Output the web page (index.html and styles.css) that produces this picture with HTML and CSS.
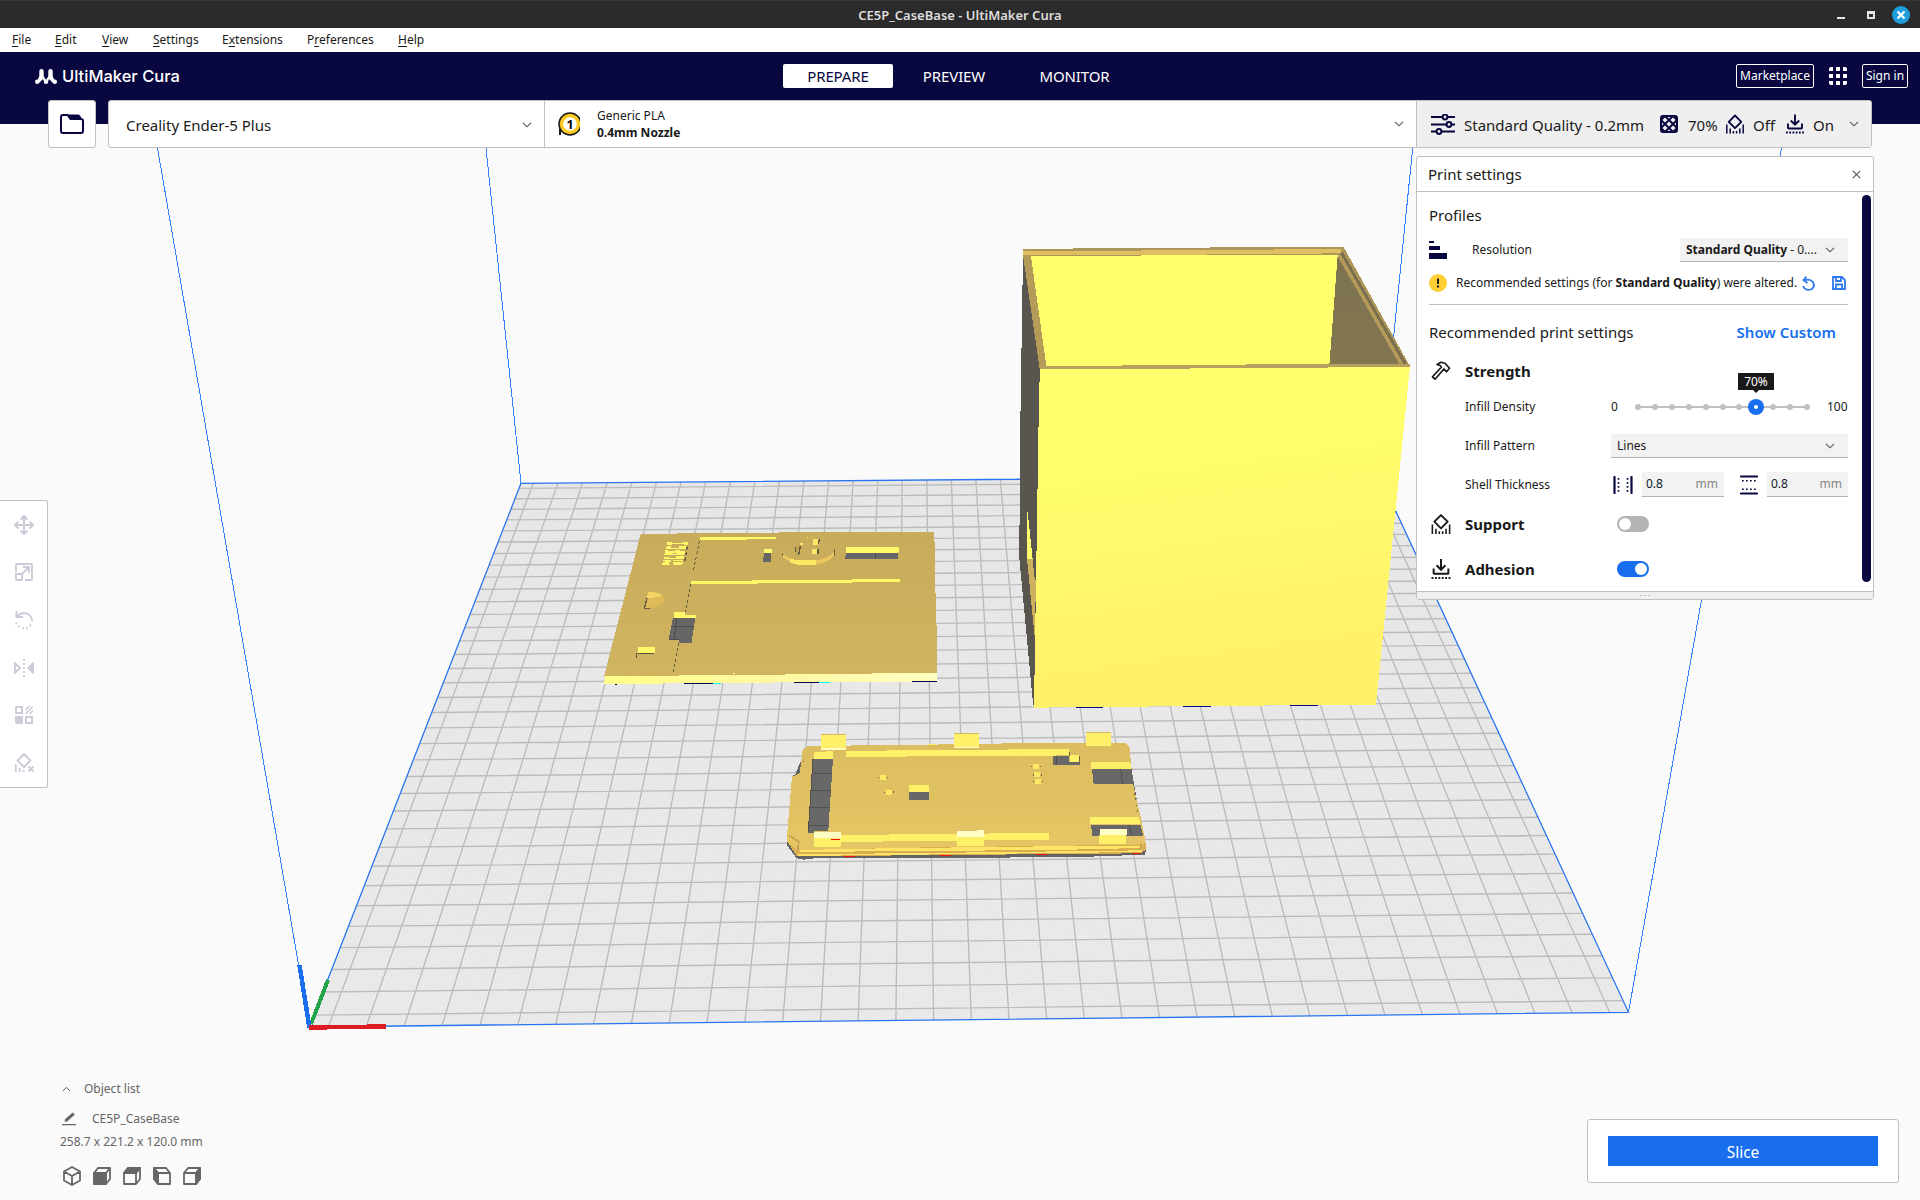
FILE: index.html
```html
<!DOCTYPE html>
<html lang="en">
<head>
<meta charset="utf-8">
<title>CE5P_CaseBase - UltiMaker Cura</title>
<link rel="stylesheet" href="styles.css">
</head>
<body>
<svg class="defs" width="0" height="0">
  <defs>
    <symbol id="chev" viewBox="0 0 10 6"><path d="M1 .8 5 4.8 9 .8" fill="none" stroke="currentColor" stroke-width="1.1"/></symbol>
    <symbol id="support" viewBox="0 0 18 19"><path d="M9 1 15.300 7.300 9 13.600 2.700 7.300Z" fill="none" stroke="currentColor" stroke-width="1.800" stroke-linejoin="round"/><path d="M.8 10v9M17.200 10v9M4.200 14v5M13.800 14v5M7.400 16.500v2.500M10.600 16.500v2.500" stroke="currentColor" stroke-width="1.500"/></symbol>
    <symbol id="adhesion" viewBox="0 0 18 19"><path d="M9 0v10M4.800 6 9 10.200 13.200 6M2 9v4.200q0 .8.8.8h12.400q.8 0 .8-.8V9" fill="none" stroke="currentColor" stroke-width="1.900"/><path d="M0 18h18" stroke="currentColor" stroke-width="1.800" stroke-dasharray="1.800 1.440"/></symbol>
  </defs>
</svg>
<div class="window">
  <header class="titlebar">
    <span class="title">CE5P_CaseBase - UltiMaker Cura</span>
    <div class="win-buttons">
      <svg width="8" height="2"><rect width="8" height="2" fill="#e6e6e6"/></svg>
      <svg width="8" height="8"><path d="M1 1h6v6H1z" fill="none" stroke="#e6e6e6" stroke-width="2"/><path d="M0 2h8" stroke="#e6e6e6" stroke-width="2"/></svg>
      <svg width="18" height="18"><circle cx="9" cy="9" r="9" fill="#1f9ede"/><path d="m5.500 5.500 7 7m0-7-7 7" stroke="#fff" stroke-width="2.200"/></svg>
    </div>
  </header>
  <nav class="menubar">
    <span class="m-file"><u>F</u>ile</span><span class="m-edit"><u>E</u>dit</span><span class="m-view"><u>V</u>iew</span><span class="m-set"><u>S</u>ettings</span><span class="m-ext">E<u>x</u>tensions</span><span class="m-pref">P<u>r</u>eferences</span><span class="m-help"><u>H</u>elp</span>
  </nav>
  <div class="header">
    <div class="brand">
      <svg width="22" height="15" viewBox="0 0 22 15"><g stroke="#fff" stroke-width="4.400" stroke-linecap="round" fill="none"><path d="M6.500 2.200v6M15.500 2.200v6M2.200 12.800h.01M11 12.800h.01M19.800 12.800h.01"/></g><path d="M4.500 7 2.500 11l1.500 3 4-4 1.500 4h3l1.500-4 4 4 1.500-3L17.500 7h-4l-2.500 4-2.500-4z" fill="#fff"/></svg>
      <span>UltiMaker Cura</span>
    </div>
    <div class="stages"><span class="stage on">PREPARE</span><span class="stage">PREVIEW</span><span class="stage wide">MONITOR</span></div>
    <div class="account">
      <span class="outline-btn market">Marketplace</span>
      <svg width="18" height="18" fill="#fff"><path d="M2 0h2v4H0V2q0-2 2-2zM7 0h4v4H7zM14 0h2q2 0 2 2v2h-4zM0 7h4v4H0zM7 7h4v4H7zM14 7h4v4h-4zM0 14h4v4H2q-2 0-2-2zM7 14h4v4H7zM14 14h4v2q0 2-2 2h-2z"/></svg>
      <span class="outline-btn signin">Sign in</span>
    </div>
  </div>
  <main class="workspace">
    <svg class="scene" viewBox="0 100 1920 1100" width="1920" height="1100">
      <defs>
        <linearGradient id="front" x1="0" y1="0" x2=".15" y2="1"><stop offset=".25" stop-color="#ffff6d"/><stop offset="1" stop-color="#fff069"/></linearGradient>
        <linearGradient id="plate" x1="0" y1="0" x2="0" y2="1"><stop offset="0" stop-color="#c8ac5b"/><stop offset="1" stop-color="#d1b45f"/></linearGradient>
        <linearGradient id="lid" x1="0" y1="0" x2="0" y2="1"><stop offset="0" stop-color="#dbbd60"/><stop offset="1" stop-color="#e6c664"/></linearGradient>
        <linearGradient id="lip" x1="0" y1="0" x2="1" y2="0"><stop offset="0" stop-color="#ffff89"/><stop offset=".5" stop-color="#fff7a0"/><stop offset="1" stop-color="#ffffc0"/></linearGradient>
        <linearGradient id="wallR" x1="0" y1="0" x2="0" y2="1"><stop offset="0" stop-color="#7d7250"/><stop offset="1" stop-color="#82774f"/></linearGradient>
      </defs>
      <rect y="100" width="1920" height="24" fill="#08073f"/>
      <polygon points="309.3,1027 1628.5,1012.3 1379.6,476.3 521,483.3" fill="#ececec"/>
      <path id="minor" fill="none" stroke="#e2e2e2" stroke-width=".5"/>
      <path id="major" fill="none" stroke="#bbb" stroke-width="1.400"/>
      <polygon points="309.3,1027 1628.5,1012.3 1379.6,476.3 521,483.3" fill="none" stroke="#2874ee" stroke-width="1.300"/>
      <path class="crisp" d="M309.300 1027 157.500 148M521 483.300 486 148M1379.600 476.300 1412.700 148M1628.500 1012.300 1781.500 148" fill="none" stroke="#3282ff"/>
      <g class="crisp">
        <path d="m311 1024 17-44" stroke="#23a44b" stroke-width="4"/>
        <path d="m309.500 1028-10-63" stroke="#196ef0" stroke-width="4.500"/>
        <path d="m309 1027.500 77-1" stroke="#dc1b23" stroke-width="4.500"/>
      </g>

      <g class="crisp" transform="translate(590 510) scale(.33333)">
        <path d="m50 520 32 2M282 520h98M612 517h80M942 514h99" stroke="#05054a" stroke-width="4"/>
        <path d="M370 520h23M687 517h33" stroke="#0ff" stroke-width="4"/>
        <path d="M152 72 380 69 760 66H1033L1036 230 1041 390V490L42 500Z" fill="url(#plate)"/>
        <path d="M46 499 312 496 642 493 975 489H1041V514L612 517 282 520 42 522Z" fill="url(#lip)"/>
        <path d="M330 81H558V87L384 90H330ZM303 213 552 211 930 207V215L705 219 303 222ZM522 117H546V129H522ZM768 111H927V124L924 129H768ZM252 306H286V315H318V324H252ZM144 411H195V430H144ZM288 395H303V399H288Z" fill="#fff868"/>
        <path d="M522 129H544V156H519ZM768 129H924V147H765ZM249 324H316L306 388V398H267V389H236Z" fill="#666"/>
        <path d="M856 129v18M261 324l-9 65M246 349h67M237 388h30" stroke="#4c4c4c" stroke-width="3"/>
        <path d="M328 93 310 183M302 222 286 306M267 399 248 490" stroke="#655c40" stroke-width="3" stroke-dasharray="9 7" fill="none"/>
        <path d="M232 95h10l6 4h30l6-4h10v9h-10l-4-2h-30l-6 3h-14zM230 109h14v5h24v-5h24l-2 8h-62zM226 119h8v4h22v-4h14v3h16l-1 6h-60zM224 130h24v3h14v-3h22l-1 6h-60zM222 140h16v3h20v-4h24l-2 7h-59zM219 150h26l-2 5h-6v6h2v4h-23l2-8h8v-4h-8zM250 150h29v4h-29zM252 155h26v6l-6 4h-18l-6-4z" fill="#fff868"/>
        <path d="M292 108 284 155" stroke="#6b6140" stroke-width="4" stroke-dasharray="12 5"/>
        <path d="M174 246Q214 244 226 269 214 292 163 296Z" fill="#dfba59"/><path d="M174 246Q208 246 219 258L188 264 171 265Z" fill="#f6d264"/><path d="m171 264-8 32h18" stroke="#6b6140" stroke-width="4" fill="none"/>
        <path d="M144 430h48M141 428l-3 15" stroke="#5a523a" stroke-width="3"/>
        <path d="M577 126Q590 152 655 153 720 149 733 122V134Q715 164 655 165 590 160 577 138Z" fill="#e9c75e"/><path d="M600 146Q625 153 678 151V164H624L600 158Z" fill="#ffe964"/><path d="M577 128v10M733 117v20" stroke="#6b6140" stroke-width="4"/>
        <path d="M613 112 634 100 628 132H619Z" fill="#c1a34f"/><path d="m616 112v14m10 8 5-25M688 88l-3 14M684 117v14" stroke="#625a3e" stroke-width="4"/><path d="M668 88h15v16h-15zM665 116h15v16h-15zM630 100h8v5h-8zM651 81h4v3h-4zM662 81h4v3h-4z" fill="#ffe766"/>
        <path d="M430 489h5v4h-5z" fill="#ffff80"/>
      </g>

      <g class="crisp" transform="translate(770 710) scale(.33333)">
        <path d="M96 144 76 192 66 200 50 392 50 405 80 445 100 449 150 443 675 443 960 440 1125 434 1128 418 1088 200 1078 120Z" fill="#646464"/>
        <path d="M112 108 475 104 790 99H1066L1078 110 1090 225 1114 330 1128 402V420L1110 430 80 439 50 391 66 200 89 190 98 120Z" fill="url(#lid)"/>
        <path d="M80 419 95 425 337 414 1112 404 1127 398V420L1112 430 80 439 60 402Z" fill="#d9ae4e"/>
        <path d="M90 420 340 415 915 408 1112 409V414L860 420 290 424 90 427ZM85 433 550 428 1115 421V426L700 431 85 438Z" fill="#ffe366"/>
        <path d="M56 376 86 395 84 420M1112 400v20" stroke="#c09f4c" stroke-width="5" fill="none"/>
        <path d="M129 147H189L175 362H132L132 369H113ZM417 246H477V270H417ZM849 138H898V156H930V164H849ZM966 178H1086L1090 222H971ZM963 344H1112L1119 377H967Z" fill="#686868"/>
        <path d="M127 190h59M124 241h59M119 292h61M116 347h59M129 147 115 365M1052 178l6 44M1078 344l6 30M860 140v24" stroke="#505050" stroke-width="3"/>
        <path d="M153 74H228V118H153ZM552 70H627V113H552ZM948 67H1023V109H948ZM132 127 189 123V147H132ZM228 123 484 120 795 118 897 117V135L795 139H474L228 141ZM417 225H477V246H417ZM963 156H1080L1085 178H963ZM900 135H927V156H900ZM960 321H1106L1112 343H960ZM213 375 410 373 560 371H642L705 369H837V389L642 391 213 396ZM132 383H213V411H132ZM561 380H642V408H561ZM987 374H1068V402H987Z" fill="#fff069"/>
        <path d="M132 366H213V384H132ZM561 363 642 361V381H561ZM990 356H1071V375H990ZM153 115h75v4h-75zM552 111h75v3h-75z" fill="#ffffc5"/>
        <path d="M153 74h75M552 71h75M948 68h75" stroke="#d9b859" stroke-width="4"/><path d="M474 103h24" stroke="#fff069" stroke-width="4"/>
        <path d="M330 195h17v15h-17zM348 240h17v15h-17zM790 162h17v15h-17zM793 187h17v15h-17zM795 207h17v15h-17z" fill="#ffe766"/>
        <path d="M326 200v5m26-5v5M344 245v5m26-7v6M786 167v5m26-5v5M790 192v5m24-5v5M791 212v5m26-5v5M102 152v5M898 127v12m31 0v24M1094 250v5m4 10v5m2 15v4m4 12v4" stroke="#706541" stroke-width="3"/>
        <path d="M183 388h27M222 439h33M510 436h33M798 433h33M1086 430h24" stroke="#f01010" stroke-width="4"/>
      </g>

      <g class="crisp" transform="translate(1000 230) scale(.33333)">
        <path d="M69 75 120 415 102 1432 99 1420 58 985 60 640Z" fill="#595650"/>
        <path d="M81 837 92 890 99 988H81Z" fill="#ffff6d"/><path d="M81 987H99L108 1060 104 1220Z" fill="#cdb05d"/><path d="M86 850 107 1050" stroke="#595650" stroke-width="5"/>
        <path d="M69 57 378 54 890 51H1031L1230 409H140L69 76Z" fill="#ad965a"/>
        <path d="M69 64 495 61 1024 57V70L568 74H69Z" fill="#dfbf60"/>
        <path d="M69 76H95L139 409 119 416Z" fill="#b49b5a"/>
        <path d="M93 79 630 75 1013 74 988 408H139Z" fill="#ffff6d"/>
        <path d="M1013 80 1198 402 988 405Z" fill="url(#wallR)"/>
        <path d="M1024 68 1216 402" stroke="#7b704d" stroke-width="9"/>
        <path d="M1019 77 1204 402" stroke="#b49b5a" stroke-width="9"/>
        <path d="M120 409 520 405 962 402H1230V411L940 413 500 416H120Z" fill="#b79f5d"/>
        <path d="M120 416 500 416 940 413 1230 410 1128 1424 600 1428 102 1433 117 500Z" fill="url(#front)"/>
        <path d="M228 1432h81M549 1429h84M870 1426h84" stroke="#05058a" stroke-width="4"/>
      </g>
    </svg>

    <div class="overlay">
      <div class="toolbar">
        <div class="open-btn"><svg width="24" height="20" viewBox="0 0 24 20"><path d="M1 3Q1 1 3 1H7.500L10.500 5H21Q23 5 23 7V17Q23 19 21 19H3Q1 19 1 17Z" fill="none" stroke="#08073f" stroke-width="2"/><path d="M8 0.500H18Q21 1 21.500 5L11 5.500Z" fill="#08073f"/></svg></div>
        <div class="config">
          <div class="machine"><span class="lg">Creality Ender-5 Plus</span><svg class="chev"><use href="#chev"/></svg></div>
          <div class="material">
            <svg width="22" height="26" viewBox="0 0 22 26"><path d="M2 13v11" stroke="#191919" stroke-width="2"/><circle cx="12" cy="13" r="9.500" fill="#fff" stroke="#191919" stroke-width="4.500"/><circle cx="12" cy="13" r="8.500" fill="#fff" stroke="#ffc924" stroke-width="3.400"/><text x="12" y="17.500" text-anchor="middle" class="badge-num">1</text></svg>
            <div class="mat-text"><span>Generic PLA</span><b>0.4mm Nozzle</b></div><svg class="chev"><use href="#chev"/></svg>
          </div>
          <div class="quality">
            <svg width="24" height="21" viewBox="0 0 24 21" fill="none" stroke="#08073f" stroke-width="2"><path d="M0 3h11m6 0h7M0 10.500h15m6 0h3M0 17.500h5m6 0h13"/><circle cx="14" cy="3" r="2.400"/><circle cx="18" cy="10.500" r="2.400"/><circle cx="8" cy="17.500" r="2.400"/></svg>
            <span class="lg q-name">Standard Quality - 0.2mm</span>
            <svg width="18" height="18" viewBox="0 0 18 18" fill="none" stroke="#08073f"><rect x="1" y="1" width="16" height="16" rx="2" stroke-width="2"/><path d="m1 5 4-4 12 12-4 4L1 5m0 8L13 1l4 4L5 17z" stroke-width="2"/></svg>
            <span class="lg q-pct">70%</span>
            <svg width="18" height="20" class="navy"><use href="#support"/></svg><span class="lg q-off">Off</span>
            <svg width="18" height="20" class="navy"><use href="#adhesion"/></svg><span class="lg q-on">On</span>
            <svg class="chev"><use href="#chev"/></svg>
          </div>
        </div>
      </div>

      <div class="tools">
        <svg width="20" height="20" viewBox="0 0 20 20"><path d="M10 2v16M2 10h16" stroke="currentColor" stroke-width="2"/><path d="M6.500 4.500 10 1l3.500 3.500M6.500 15.500 10 19l3.500-3.500M4.500 6.500 1 10l3.500 3.500M15.500 6.500 19 10l-3.500 3.500" fill="none" stroke="currentColor" stroke-width="2"/></svg>
        <svg width="20" height="20" viewBox="0 0 20 20" fill="none" stroke="currentColor" stroke-width="1.800"><path d="M2 10V3q0-1 1-1h14q1 0 1 1v14q0 1-1 1H11M2 12h6v6H3q-1 0-1-1zM8 12l7-7M9 5h6v6"/></svg>
        <svg width="20" height="20" viewBox="0 0 20 20" fill="none" stroke="currentColor" stroke-width="1.900"><path d="M2.500 1v6H9M3 6.500Q8 1.500 13 3.500 18 6 18.200 11"/><path d="M17 14.500Q13 20 8 18 2 16 1.500 10.500" stroke-dasharray="1.900 2.300"/></svg>
        <svg width="20" height="20" viewBox="0 0 20 20"><path d="M1 5.500 6 10 1 14.500z" fill="none" stroke="currentColor" stroke-width="1.900"/><path d="M19 4q1 0 1 1v10q0 1-1 1l-6-6z" fill="currentColor"/><path d="M10 1v18" stroke="currentColor" stroke-width="1.800" stroke-dasharray="2 2"/></svg>
        <svg width="20" height="20" viewBox="0 0 20 20"><path d="M2 2h6v6H2zM12 12h6v6h-6z" fill="none" stroke="currentColor" stroke-width="1.900"/><path d="M1 11h8v8H3q-2 0-2-2z" fill="currentColor"/><path d="m11.500 5 4-4M11.500 9l7-7M15.500 9l3.500-3.500" stroke="currentColor" stroke-width="1.700"/></svg>
        <svg width="20" height="20" viewBox="0 0 20 20"><path d="m10 1 6.500 6.500L10 14 3.500 7.500z" fill="none" stroke="currentColor" stroke-width="1.800" stroke-linejoin="round"/><path d="M1.800 11v8M5.600 15v4M9.600 17v2" stroke="currentColor" stroke-width="1.800"/><path d="m14.500 13.500 5 5m0-5-5 5" stroke="currentColor" stroke-width="1.800"/></svg>
      </div>

      <section class="panel">
        <div class="panel-head"><span class="lg">Print settings</span><svg width="9" height="9"><path d="m.8.8 7.400 7.400m0-7.400L.8 8.200" stroke="#555" stroke-width="1.100"/></svg></div>
        <div class="panel-body">
          <div class="panel-content">
            <div class="sec-title">Profiles</div>
            <div class="row resolution">
              <svg width="18" height="18" fill="#08073f"><path d="M0 0h5v2H0zM0 5h11v4H0zM0 12h18v6H0z"/></svg>
              <span class="grow">Resolution</span>
              <div class="select res-select"><span><b>Standard Quality</b> - 0....</span><svg class="chev"><use href="#chev"/></svg></div>
            </div>
            <div class="row notice">
              <svg width="18" height="18"><circle cx="9" cy="9" r="9" fill="#ffcf33"/><path d="M9 4.500v5.500M9 11.500v2" stroke="#191919" stroke-width="2"/></svg>
              <span class="notice-text">Recommended settings (for <b>Standard Quality</b>) were altered.</span>
              <svg width="13" height="15" viewBox="0 0 13 15" fill="none" stroke="#2e78f0" stroke-width="1.800"><path d="M4.500.6 1.500 4l4 3M2 4.300Q8 2.500 11 6 13.500 11 9 13.500 3 15 1.200 10"/></svg>
              <svg width="14" height="14" viewBox="0 0 14 14" fill="none" stroke="#2e78f0" stroke-width="1.800"><path d="M1 1h9l3 3v9H1zM4 1v4h5V1M4 13V8.500h6V13"/></svg>
            </div>
            <div class="row recommended"><span class="grow lg">Recommended print settings</span><a>Show Custom</a></div>
            <div class="row group">
              <svg width="20" height="20" viewBox="0 0 20 20" fill="none" stroke="#191919" stroke-width="1.700"><path d="m6 3.500 4-2.200 4 1 4.500 5-3 3.500-2.500-2.800-9 10.200-2.500-2.400 9-9.800L9 4.500z" stroke-linejoin="round"/></svg>
              <b>Strength</b>
            </div>
            <div class="row setting density"><span class="label">Infill Density</span><span class="zero">0</span>
              <div class="slider"><svg width="176" height="18" viewBox="0 0 176 18"><path d="M3 9h170" stroke="#c0c0c0" stroke-width="2"/><g fill="#c0c0c0"><circle cx="3" cy="9" r="3"/><circle cx="20" cy="9" r="3"/><circle cx="37" cy="9" r="3"/><circle cx="54" cy="9" r="3"/><circle cx="71" cy="9" r="3"/><circle cx="88" cy="9" r="3"/><circle cx="104" cy="9" r="3"/><circle cx="138" cy="9" r="3"/><circle cx="155" cy="9" r="3"/><circle cx="172" cy="9" r="3"/></g><circle cx="121" cy="9" r="8" fill="#196ef0"/><circle cx="121" cy="9" r="2" fill="#fff"/></svg><span class="tip">70%</span></div>
              <span>100</span></div>
            <div class="row setting pattern"><span class="label">Infill Pattern</span><div class="select wide-select"><span>Lines</span><svg class="chev"><use href="#chev"/></svg></div></div>
            <div class="row setting shell"><span class="label">Shell Thickness</span>
              <svg width="20" height="18" viewBox="0 0 20 18" stroke="#08073f"><path d="M1.500 1v16M18.500 1v16" stroke-width="2.200" stroke-linecap="round"/><path d="M5.500 2v14M14.500 2v14" stroke-width="1.700" stroke-dasharray="1.700 2.300"/></svg>
              <div class="num n1"><span>0.8</span><i>mm</i></div>
              <svg width="18" height="20" viewBox="0 0 18 20" stroke="#08073f"><path d="M1 1.500h16M1 18.500h16" stroke-width="2.200" stroke-linecap="round"/><path d="M2 5.800h14M2 14.200h14" stroke-width="1.600" stroke-dasharray="1.700 2.300"/></svg>
              <div class="num n2"><span>0.8</span><i>mm</i></div>
            </div>
            <div class="row group sup"><svg width="18" height="20"><use href="#support"/></svg><b>Support</b><span class="toggle"></span></div>
            <div class="row group adh"><svg width="18" height="20"><use href="#adhesion"/></svg><b>Adhesion</b><span class="toggle on"></span></div>
          </div>
          <div class="scrollbar"></div>
        </div>
        <div class="panel-foot"><i></i><i></i><i></i></div>
      </section>

      <div class="objects">
        <div class="ob-row list"><svg width="9" height="6" viewBox="0 0 10 6"><path d="M1 5.200 5 1.200 9 5.200" fill="none" stroke="#555" stroke-width="1.100"/></svg><span>Object list</span></div>
        <div class="ob-row name"><svg width="14" height="14" viewBox="0 0 14 14" fill="#666"><path d="M0 12h14v1.300H0zM2.500 10l.7-3 7.500-6.500 2.200 2-7.400 6.700z"/></svg><span>CE5P_CaseBase</span></div>
        <div class="ob-row dims">258.7 x 221.2 x 120.0 mm</div>
        <div class="views">
          <svg width="18" height="20" viewBox="0 0 18 20"><path d="m9 1 8 4.500v9L9 19l-8-4.500v-9zM1 5.500 9 10l8-4.500M9 10v9"/></svg>
          <svg width="18" height="18" viewBox="0 0 18 18"><path d="M1 6 5 1h12v11l-4 5H1zM13 6l4-5M1 6h12v11"/><path class="f" d="M1 6h12v11H1z"/></svg>
          <svg width="18" height="18" viewBox="0 0 18 18"><path d="M1 6 5 1h12v11l-4 5H1zM1 6h12v11M13 6l4-5"/><path class="f" d="M1 6 5 1h12l-4 5z"/></svg>
          <svg width="18" height="18" viewBox="0 0 18 18"><path d="M17 6 13 1H1v11l4 5h12zM5 6h12M5 17V6L1 1"/><path class="f" d="M1 1l4 5v11l-4-5z"/></svg>
          <svg width="18" height="18" viewBox="0 0 18 18"><path d="M1 6 5 1h12v11l-4 5H1zM1 6h12v11M13 6l4-5"/><path class="f" d="m17 1-4 5v11l4-5z"/></svg>
        </div>
      </div>
      <div class="action"><div class="slice">Slice</div></div>
    </div>
  </main>
</div>
<script src="grid.js"></script>
</body>
</html>
```
FILE: grid.js
```js
// Projects the 350 x 350 mm build plate onto the view and draws its grid.
const corners = [[309.3, 1027], [1628.5, 1012.3], [1379.6, 476.3], [521, 483.3]];
const [[x0, y0], [x1, y1], [x2, y2], [x3, y3]] = corners;
const dx1 = x1 - x2, dx2 = x3 - x2, sx = x0 - x1 + x2 - x3;
const dy1 = y1 - y2, dy2 = y3 - y2, sy = y0 - y1 + y2 - y3;
const det = dx1 * dy2 - dx2 * dy1;
const g = (sx * dy2 - dx2 * sy) / det;
const h = (dx1 * sy - sx * dy1) / det;
const a = x1 - x0 + g * x1, b = x3 - x0 + h * x3;
const d = y1 - y0 + g * y1, e = y3 - y0 + h * y3;

function project(u, v) {
  const w = g * u + h * v + 1;
  return ((a * u + b * v + x0) / w).toFixed(2) + ' ' + ((d * u + e * v + y0) / w).toFixed(2);
}

let major = '', minor = '';
for (let mm = 1; mm < 350; mm++) {
  const t = mm / 350;
  const line = `M${project(t, 0)}L${project(t, 1)}M${project(0, t)}L${project(1, t)}`;
  if (mm % 10 === 5) major += line; else minor += line;
}
document.getElementById('major').setAttribute('d', major);
document.getElementById('minor').setAttribute('d', minor);
```
FILE: styles.css
```css
* { box-sizing: border-box; }
body { margin: 0; background: #fafafa; color: #191919; font: 12px/18px "Noto Sans", sans-serif; }
svg { display: block; flex: none; }
.defs { position: absolute; }
.window { width: 1920px; height: 1200px; display: flex; flex-direction: column; overflow: hidden; }
.crisp { shape-rendering: crispEdges; }

.titlebar { height: 28px; background: #2b2b2b; border-top: 1px solid #383838; display: grid; grid-template-columns: 1fr auto 1fr; align-items: center; color: #dedede; }
.title { grid-column: 2; font: 600 13px/18px "Noto Sans", sans-serif; }
.win-buttons { justify-self: end; display: flex; align-items: center; gap: 22px; padding-right: 10px; }
.win-buttons svg:first-child { margin-top: 6px; }
.win-buttons svg:last-child { margin-left: -5px; }

.menubar { height: 24px; background: #fff; display: flex; align-items: center; padding: 0 0 1px 12px; }
.menubar span { white-space: nowrap; }
.menubar u { text-underline-offset: 2px; }
.m-file { width: 43px; } .m-edit { width: 47px; } .m-view { width: 51px; } .m-set { width: 69px; }
.m-ext { width: 85px; } .m-pref { width: 91px; }

.header { height: 48px; background: #08073f; color: #fff; display: grid; grid-template-columns: 783px 1fr auto; align-items: center; }
.brand { display: flex; align-items: center; gap: 5px; padding-left: 35px; font: 500 16.500px/20px Inter, sans-serif; }
.stages { display: flex; gap: 6px; font-size: 15px; letter-spacing: -.1px; }
.stage { width: 110px; height: 24px; line-height: 25px; text-align: center; border-radius: 2px; }
.stage.wide { width: 119px; }
.stage.on { background: #fff; color: #08073f; }
.account { display: flex; align-items: center; padding-right: 12px; gap: 15px; }
.outline-btn { height: 24px; border: 1px solid #fff; border-radius: 2px; line-height: 21px; text-align: center; }
.market { width: 78px; } .signin { width: 46px; }

.workspace { display: grid; height: 1100px; }
.scene, .overlay { grid-area: 1 / 1; }
.overlay { display: grid; z-index: 1; grid-template-columns: 1416px 458px 1fr; grid-template-rows: 56px 344px 543px 1fr; width: 1920px; height: 1100px; }

.toolbar { grid-column: 1 / 4; display: flex; gap: 12px; padding-left: 48px; height: 48px; }
.open-btn { width: 48px; background: #fff; border: 1px solid #c0c0c0; border-radius: 3px; display: grid; place-items: center; }
.config { width: 1764px; display: grid; grid-template-columns: 435px 873px 1fr; background: #fff; border: 1px solid #c0c0c0; border-radius: 3px; }
.config > div { display: flex; align-items: center; }
.lg { font-size: 15px; line-height: 22px; white-space: nowrap; }
.chev { width: 10px; height: 6px; color: #555; margin-left: auto; }
.machine { padding: 1px 12px 0 17px; }
.material { border-left: 1px solid #c0c0c0; border-right: 1px solid #c0c0c0; padding: 0 12px 0 13px; }
.badge-num { font: 700 12.500px "Noto Sans", sans-serif; }
.mat-text { display: flex; flex-direction: column; line-height: 17px; padding-left: 17px; }
.quality { background: #efefef; padding: 0 12px 0 14px; }
.navy { color: #08073f; }
.q-name { margin-left: 9px; width: 196px; padding-top: 1px; }
.q-pct { margin-left: 10px; width: 38px; padding-top: 1px; }
.q-off { margin-left: 9px; width: 33px; padding-top: 1px; }
.q-on { margin-left: 9px; padding-top: 1px; }

.tools { grid-column: 1; grid-row: 3; width: 48px; height: 288px; background: #fff; border: 1px solid #c0c0c0; border-left: 0; border-radius: 0 3px 3px 0; color: #cdcbd9; display: flex; flex-direction: column; align-items: center; justify-content: space-around; }

.panel { grid-column: 2; grid-row: 2 / 4; height: 444px; background: #fff; border: 1px solid #c0c0c0; border-radius: 3px; display: flex; flex-direction: column; }
.panel-head { height: 35px; border-bottom: 1px solid #c0c0c0; display: flex; align-items: center; justify-content: space-between; padding: 0 12px 0 11px; }
.panel-body { flex: 1; display: flex; justify-content: space-between; padding: 3px 2px 0 12px; }
.panel-content { width: 419px; display: flex; flex-direction: column; }
.scrollbar { width: 9px; height: 387px; border-radius: 5px; background: #08073f; }
.sec-title { font-size: 15px; line-height: 22px; padding-top: 9px; height: 43px; }
.row { display: flex; align-items: center; white-space: nowrap; }
.grow { flex: 1; }
.resolution { height: 24px; }
.resolution .grow { padding-left: 25px; }
.select { background: #f2f2f2; border-bottom: 1px solid #b4b4b4; height: 24px; display: flex; align-items: center; padding: 0 13px 0 6px; }
.res-select { width: 168px; }
.wide-select { width: 237px; }
.notice { height: 42px; }
.notice-text { padding-left: 9px; width: 355px; }
.notice svg:last-child { margin-left: auto; margin-right: 2px; }
.notice svg:nth-last-child(2) { margin-top: 1px; }
.recommended { border-top: 1px solid #c0c0c0; height: 56px; padding-bottom: 2px; }
.recommended a { color: #196ef0; font-weight: 600; font-size: 15px; padding-right: 12px; }
.group { height: 22px; font-size: 15px; }
.group svg { width: 20px; margin-left: 2px; }
.group b { margin-left: 14px; width: 152px; }
.setting { height: 25px; }
.setting .label { width: 146px; margin-left: 36px; }
.density { height: 50px; }
.density .zero { width: 24px; }
.slider { position: relative; width: 192px; }
.tip { position: absolute; left: 103px; top: -25px; width: 36px; height: 17px; line-height: 17px; text-align: center; background: #191919; color: #fff; }
.tip::after { content: ""; position: absolute; left: 15px; top: 17px; border: 3px solid transparent; border-top-color: #191919; }
.pattern { margin-top: 2px; height: 24px; }
.shell { margin-top: 14px; }
.shell svg { margin-left: 2px; }
.num { background: #f2f2f2; border-bottom: 1px solid #b4b4b4; height: 25px; display: flex; align-items: center; justify-content: space-between; padding: 0 6px 0 4px; width: 82px; margin-left: 9px; color: #0f1a2a; }
.num i { font-style: normal; color: #868686; }
.n1 { margin-right: 14px; }
.n2 { width: 81px; margin-left: auto; }
.sup { margin-top: 16px; }
.adh { margin-top: 23px; }
.toggle { width: 32px; height: 16px; border-radius: 8px; background: #b4b4b4; padding: 2px; }
.toggle::before { content: ""; display: block; width: 12px; height: 12px; border-radius: 6px; background: #fff; }
.toggle.on { background: #196ef0; padding-left: 18px; }
.panel-foot { height: 8px; border-top: 1px solid #c0c0c0; background: #efefef; display: flex; justify-content: center; align-items: center; gap: 2px; }
.panel-foot i { width: 2px; height: 1px; background: #c0c0c0; }

.objects { grid-column: 1; grid-row: 4; padding: 34px 0 0 60px; color: #666; display: flex; flex-direction: column; }
.ob-row { display: flex; align-items: center; height: 24px; }
.list { padding-left: 2px; }
.list span { padding-left: 13px; }
.name { padding-left: 2px; margin-top: 6px; }
.name span { padding-left: 16px; }
.dims { padding-bottom: 2px; }
.views { display: flex; gap: 12px; align-items: center; padding: 11px 0 0 3px; }
.views path { fill: none; stroke: #666; stroke-width: 1.800; stroke-linejoin: round; }
.views .f { fill: #666; }
.action { grid-column: 2 / 4; grid-row: 4; justify-self: end; margin: 76px 21px 0 0; width: 312px; height: 64px; background: #fff; border: 1px solid #c0c0c0; border-radius: 3px; padding: 16px 20px; }
.slice { height: 30px; background: #196ef0; color: #fff; font-size: 15.500px; line-height: 32px; text-align: center; }
```
